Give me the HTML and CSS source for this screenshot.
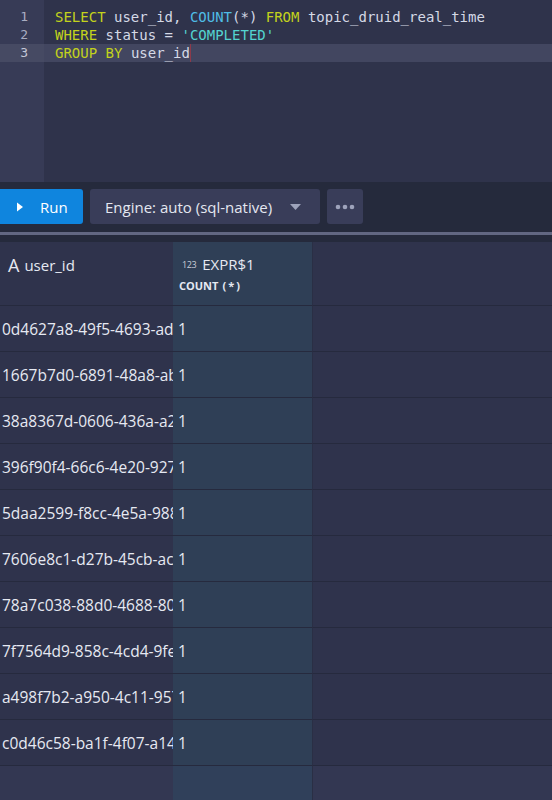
FILE: index.html
```html
<!DOCTYPE html>
<html>
<head>
<meta charset="utf-8">
<link rel="stylesheet" href="styles.css">
</head>
<body>
<div class="app">
  <div class="editor">
    <div class="gutter">
      <div class="ln">1</div>
      <div class="ln">2</div>
      <div class="ln active">3</div>
    </div>
    <div class="code">
      <div class="line"><span class="kw">SELECT</span> user_id, <span class="fn">COUNT</span>(*) <span class="kw">FROM</span> topic_druid_real_time</div>
      <div class="line"><span class="kw">WHERE</span> status = <span class="str">'COMPLETED'</span></div>
      <div class="line active"><span class="kw">GROUP</span> <span class="kw">BY</span> user_id<span class="cursor"></span></div>
    </div>
  </div>
  <div class="toolbar">
    <button class="btn run">
      <svg width="8" height="10" viewBox="0 0 8 10"><path d="M1 0.5 L7 5 L1 9.5 Z" fill="#fff"/></svg>
      <span>Run</span>
    </button>
    <button class="btn engine">
      <span>Engine: auto (sql-native)</span>
      <svg width="11" height="6" viewBox="0 0 11 6"><path d="M0 0 H11 L5.5 6 Z" fill="#9ea3bb"/></svg>
    </button>
    <button class="btn more">
      <svg width="20" height="6" viewBox="0 0 20 6"><circle cx="3" cy="3" r="2.3" fill="#9ea3bb"/><circle cx="10" cy="3" r="2.3" fill="#9ea3bb"/><circle cx="17" cy="3" r="2.3" fill="#9ea3bb"/></svg>
    </button>
  </div>
  <div class="divider"></div>
  <div class="table">
    <div class="head c1"><span class="type-a">A</span><span class="hname">user_id</span></div>
    <div class="head c2">
      <div class="hrow"><span class="type-n">123</span><span class="hname">EXPR$1</span></div>
      <div class="hexpr">COUNT<span class="paren">(*)</span></div>
    </div>
    <div class="head c3"></div>

    <div class="cell c1"><span class="clip">0d4627a8-49f5-4693-ad5</span></div><div class="cell c2">1</div><div class="cell c3"></div>
    <div class="cell c1"><span class="clip">1667b7d0-6891-48a8-ab</span></div><div class="cell c2">1</div><div class="cell c3"></div>
    <div class="cell c1"><span class="clip">38a8367d-0606-436a-a2f</span></div><div class="cell c2">1</div><div class="cell c3"></div>
    <div class="cell c1"><span class="clip">396f90f4-66c6-4e20-927</span></div><div class="cell c2">1</div><div class="cell c3"></div>
    <div class="cell c1"><span class="clip">5daa2599-f8cc-4e5a-988</span></div><div class="cell c2">1</div><div class="cell c3"></div>
    <div class="cell c1"><span class="clip">7606e8c1-d27b-45cb-ac9</span></div><div class="cell c2">1</div><div class="cell c3"></div>
    <div class="cell c1"><span class="clip">78a7c038-88d0-4688-80c</span></div><div class="cell c2">1</div><div class="cell c3"></div>
    <div class="cell c1"><span class="clip">7f7564d9-858c-4cd4-9fe</span></div><div class="cell c2">1</div><div class="cell c3"></div>
    <div class="cell c1"><span class="clip">a498f7b2-a950-4c11-957</span></div><div class="cell c2">1</div><div class="cell c3"></div>
    <div class="cell c1"><span class="clip">c0d46c58-ba1f-4f07-a14</span></div><div class="cell c2">1</div><div class="cell c3"></div>

    <div class="fill c1"></div><div class="fill c2"></div><div class="fill c3"></div>
  </div>
</div>
</body>
</html>
```

FILE: styles.css
```css
html, body {
  margin: 0;
  padding: 0;
  height: 100%;
  background: #252a3c;
  overflow: hidden;
}
.app {
  display: flex;
  flex-direction: column;
  height: 800px;
  width: 552px;
}
.editor {
  display: flex;
  height: 182px;
  background: #2f334b;
  font-family: "DejaVu Sans Mono", monospace;
  font-size: 14px;
  line-height: 18px;
  flex: none;
}
.gutter {
  width: 44px;
  background: #373b56;
  padding-top: 8px;
  flex: none;
}
.ln {
  text-align: right;
  padding-right: 16px;
  color: #a9adc2;
  font-size: 13px;
}
.ln.active {
  background: #464a63;
  color: #c4c8d8;
}
.code {
  flex: 1;
  padding-top: 8px;
  color: #d5d9e6;
}
.line {
  padding-left: 11px;
  white-space: pre;
}
.line.active {
  background: #424660;
}
.kw { color: #c3d21c; }
.fn { color: #4fbde6; }
.str { color: #54d3d0; }
.cursor {
  display: inline-block;
  width: 1px;
  height: 18px;
  background: #8c3a4a;
  vertical-align: top;
}
.toolbar {
  display: flex;
  align-items: center;
  gap: 7px;
  padding: 7px 0 8px 0;
  background: #252a3c;
  flex: none;
}
.btn {
  display: flex;
  align-items: center;
  height: 35px;
  border: none;
  border-radius: 3px;
  font-family: "Open Sans", sans-serif;
  font-size: 15px;
  padding: 0;
  margin: 0;
}
.run {
  width: 83px;
  background: #0f85de;
  color: #fff;
  border-radius: 0 3px 3px 0;
  padding-left: 16px;
  gap: 16px;
  box-sizing: border-box;
}
.engine {
  width: 230px;
  background: #393d59;
  color: #e4e7f0;
  padding: 0 19px 0 15px;
  justify-content: space-between;
  box-sizing: border-box;
}
.more {
  width: 36px;
  background: #393d59;
  justify-content: center;
}
.divider {
  height: 3px;
  background: #626782;
  margin-bottom: 7px;
  flex: none;
}
.table {
  flex: 1;
  display: grid;
  grid-template-columns: 173px 140px 1fr;
  grid-template-rows: 64px repeat(10, 46px) 1fr;
  font-family: "Open Sans", sans-serif;
  font-size: 15.5px;
  color: #e6e9f2;
}
.c1, .c3 { background: #2f334c; }
.c2 { background: #2f3f56; }
.c2 { border-right: 1px solid #2a2f45; }
.head, .cell {
  border-bottom: 1px solid #262a3e;
  box-sizing: border-box;
}
.head.c1 {
  display: flex;
  align-items: center;
  padding-left: 8px;
  padding-bottom: 18px;
  gap: 5px;
}
.type-a {
  font-size: 18px;
  color: #e6e9f2;
}
.hname {
  font-size: 15px;
}
.head.c2 {
  display: flex;
  flex-direction: column;
  padding: 12px 0 0 6px;
}
.hrow {
  display: flex;
  align-items: center;
  gap: 6px;
  padding-left: 3px;
}
.type-n {
  font-size: 9px;
  color: #c9ccd8;
  letter-spacing: -0.4px;
}
.hexpr {
  font-size: 11px;
  font-weight: bold;
  margin-top: 4px;
}
.paren {
  margin-left: 4px;
  letter-spacing: 2px;
}
.cell {
  display: flex;
  align-items: center;
  white-space: nowrap;
  overflow: hidden;
}
.cell.c1 { padding-left: 2px; }
.cell.c2 { padding-left: 5px; }
.clip {
  display: block;
  max-width: 171px;
  overflow: hidden;
  white-space: nowrap;
}
.fill.c1, .fill.c3 { background: #333752; }
.fill.c2 { background: #30405a; }
```
